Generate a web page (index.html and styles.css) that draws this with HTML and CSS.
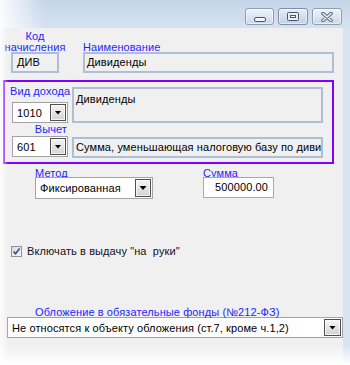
FILE: index.html
```html
<!DOCTYPE html>
<html>
<head>
<meta charset="utf-8">
<title>Начисление</title>
<link rel="stylesheet" href="styles.css">
</head>
<body>
<div class="window">
  <div class="titlebar">
    <div class="tb-btn min">
      <svg width="12" height="5" viewBox="0 0 12 5"><rect x="0.5" y="0.5" width="11" height="4" rx="1.5" fill="#f3f6fa" stroke="#4a5667"/></svg>
    </div>
    <div class="tb-btn max">
      <svg width="12" height="9" viewBox="0 0 12 9"><rect x="0.5" y="0.5" width="11" height="8" rx="1" fill="#e6ecf4" stroke="#4a5667"/><rect x="3.5" y="3.5" width="5" height="2" fill="#ffffff" stroke="#4a5667"/></svg>
    </div>
    <div class="tb-btn close">
      <svg width="12" height="10" viewBox="0 0 12 10"><path d="M2 1.5 L10 8.5 M10 1.5 L2 8.5" stroke="#5b6778" stroke-width="3.6" stroke-linecap="round"/><path d="M2 1.5 L10 8.5 M10 1.5 L2 8.5" stroke="#f4f7fb" stroke-width="1.6" stroke-linecap="round"/></svg>
    </div>
  </div>
  <div class="client">
    <div class="row1">
      <div class="code-col">
        <div class="lbl code-lbl">Код<br>начисления</div>
        <div class="field ro code-box">ДИВ</div>
      </div>
      <div class="name-col">
        <div class="lbl">Наименование</div>
        <div class="field ro name-box">Дивиденды</div>
      </div>
    </div>

    <div class="group">
      <div class="grow row-a">
        <div class="gcol">
          <div class="lbl">Вид дохода</div>
          <div class="combo"><span class="val">1010</span><span class="dd"></span></div>
        </div>
        <div class="field ro memo">Дивиденды</div>
      </div>
      <div class="grow row-b">
        <div class="gcol">
          <div class="lbl">Вычет</div>
          <div class="combo"><span class="val">601</span><span class="dd"></span></div>
        </div>
        <div class="field ro deduct">Сумма, уменьшающая налоговую базу по дивидендам</div>
      </div>
    </div>

    <div class="row3">
      <div class="method">
        <div class="lbl">Метод</div>
        <div class="combo tall"><span class="val">Фиксированная</span><span class="dd"></span></div>
      </div>
      <div class="sum">
        <div class="lbl">Сумма</div>
        <div class="field sum-box">500000.00</div>
      </div>
    </div>

    <div class="check-row">
      <svg class="cb" width="11" height="11" viewBox="0 0 11 11">
        <defs><linearGradient id="cbg" x1="0" y1="0" x2="1" y2="1"><stop offset="0" stop-color="#d4d8de"/><stop offset="1" stop-color="#f7f8fa"/></linearGradient></defs>
        <rect x="0.5" y="0.5" width="10" height="10" fill="url(#cbg)" stroke="#8f959d"/>
        <path d="M2.6 5.4 L4.6 7.8 L8.6 2.6" fill="none" stroke="#3f4f7c" stroke-width="1.6"/>
      </svg>
      <span class="cb-text">Включать в выдачу "на&nbsp; руки"</span>
    </div>

    <div class="tax">
      <div class="lbl">Обложение в обязательные фонды (№212-ФЗ)</div>
      <div class="combo wide"><span class="val">Не относятся к объекту обложения (ст.7, кроме ч.1,2)</span><span class="dd"></span></div>
    </div>
  </div>
  <div class="fade-left"></div>
  <div class="fade-bottom"></div>
</div>
</body>
</html>
```

FILE: styles.css
```css
* {
  box-sizing: border-box;
}

html,
body {
  margin: 0;
  padding: 0;
  background: #ffffff;
}

body {
  font-family: "Liberation Sans", Arial, sans-serif;
  font-size: 11px;
  letter-spacing: 0.1px;
  color: #000000;
}

.window {
  position: relative;
  width: 350px;
  height: 365px;
  overflow: hidden;
  display: flex;
  flex-direction: column;
  background: linear-gradient(#c6d6ea, #d9e4f2 28px, #d8e4f2);
}

/* title bar */
.titlebar {
  flex: none;
  height: 28px;
  display: flex;
  justify-content: flex-end;
  align-items: flex-start;
  gap: 4px;
  padding: 8px 8px 0 0;
  background:
    linear-gradient(to right, rgba(255, 255, 255, 0.92), rgba(255, 255, 255, 0) 45px),
    linear-gradient(#c5d5e9, #d6e2f0);
}

.tb-btn {
  width: 30px;
  height: 17px;
  border: 1px solid #8e9db2;
  border-radius: 3px;
  background: linear-gradient(#eef3f9, #dde6f1 50%, #cbd8e8);
  box-shadow: inset 0 0 0 1px rgba(255, 255, 255, 0.55);
  display: flex;
  align-items: center;
  justify-content: center;
}

.tb-btn svg {
  display: block;
}

.tb-btn.min {
  width: 29px;
  align-items: flex-end;
  padding-bottom: 2px;
}

.tb-btn.max {
  border-color: #7d8ea6;
  background: linear-gradient(#e6edf6, #d3dfec 50%, #c2d1e3);
}

/* client area */
.client {
  flex: 1;
  margin-right: 7px;
  background: #f0f0f0;
}

.lbl {
  color: #1f1fff;
  line-height: 10px;
  white-space: nowrap;
}

.field {
  height: 21px;
  line-height: 17px;
  white-space: nowrap;
  overflow: hidden;
}

.ro {
  background: #f0f0f0;
  border: 2px solid #afbfd3;
  padding: 0 2px;
}

/* row 1 */
.row1 {
  display: flex;
  align-items: flex-end;
  padding: 2px 0 0 5px;
}

.code-col {
  width: 60px;
  display: flex;
  flex-direction: column;
  align-items: center;
}

.code-col .lbl {
  text-align: center;
}

.code-lbl {
  line-height: 11px;
  padding-top: 1px;
  margin-bottom: -1px;
}

.code-box {
  width: 48px;
  padding-left: 4px;
}

.name-col {
  width: 251px;
  margin-left: 18px;
  display: flex;
  flex-direction: column;
}

/* purple group */
.group {
  margin: 7px 0 0 3px;
  width: 331px;
  height: 84px;
  border: 2px solid #8000ff;
  padding: 4px 9px 4px 5px;
  display: flex;
  flex-direction: column;
}

.grow {
  display: flex;
}

.gcol {
  width: 58px;
  display: flex;
  flex-direction: column;
}

.gcol .combo {
  margin-left: 2px;
  width: 56px;
}

.row-a .combo {
  margin-top: 6px;
}

.memo {
  margin: 1px 0 0 4px;
  width: 251px;
  height: 36px;
  padding-top: 2px;
}

.row-b {
  margin-top: 1px;
}

.row-b .lbl {
  text-align: right;
  padding-right: 1px;
}

.row-b .combo {
  margin-top: 2px;
}

.deduct {
  margin: 13px 0 0 4px;
  width: 251px;
}

/* combo boxes */
.combo {
  height: 21px;
  display: flex;
  align-items: stretch;
  background: #ffffff;
  border: 1px solid #a3a3a3;
  padding: 1px;
}

.combo .val {
  flex: 1;
  min-width: 0;
  padding-left: 3px;
  white-space: nowrap;
  overflow: hidden;
  display: flex;
  align-items: center;
}

.dd {
  flex: none;
  width: 16px;
  border: 1px solid #4f4f4f;
  background: linear-gradient(#f4f4f4, #e4e4e4 50%, #d2d2d2);
  box-shadow: inset 0 0 0 1px rgba(255, 255, 255, 0.7);
  display: flex;
  align-items: center;
  justify-content: center;
}

.dd::after {
  content: "";
  width: 7px;
  height: 4px;
  background: #000000;
  clip-path: polygon(0 0, 100% 0, 50% 100%);
}

.combo.tall {
  height: 22px;
}

/* row 3 */
.row3 {
  display: flex;
  margin-top: 4px;
}

.row3 .lbl {
  margin-bottom: -1px;
}

.method {
  margin-left: 35px;
  width: 118px;
  display: flex;
  flex-direction: column;
}

.sum {
  margin-left: 50px;
  width: 71px;
  display: flex;
  flex-direction: column;
}

.sum-box {
  background: #ffffff;
  border: 1px solid #a9a9a9;
  text-align: right;
  padding-right: 5px;
  line-height: 19px;
}

/* checkbox */
.check-row {
  display: flex;
  align-items: center;
  height: 11px;
  line-height: 11px;
  margin: 47px 0 0 11px;
}

.cb {
  display: block;
  flex: none;
  margin-right: 5px;
}

.cb-text {
  white-space: nowrap;
  color: #111122;
}

/* tax row */
.tax {
  margin: 50px 0 0 0;
}

.tax .lbl {
  padding-left: 35px;
}

.combo.wide {
  margin-left: 7px;
  width: 336px;
}

.combo.wide .dd {
  width: 17px;
}

/* edge fades */
.fade-left {
  position: absolute;
  left: 0;
  top: 28px;
  bottom: 0;
  width: 8px;
  background: linear-gradient(to right, rgba(255, 255, 255, 0.8), rgba(255, 255, 255, 0));
  pointer-events: none;
}

.fade-bottom {
  position: absolute;
  left: 0;
  right: 0;
  bottom: 0;
  height: 20px;
  background: linear-gradient(rgba(255, 255, 255, 0), #ffffff);
  pointer-events: none;
}
```
